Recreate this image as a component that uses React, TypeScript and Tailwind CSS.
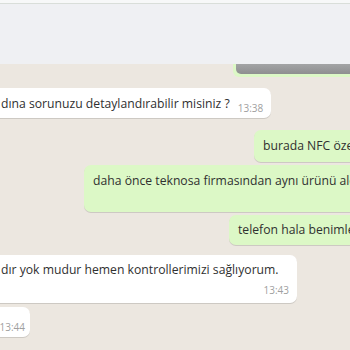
import React from "react";

const font = "font-['Open_Sans','Liberation_Sans',sans-serif]";

const Time = ({ t }: { t: string }) => (
  <span className="text-[10px] leading-[12px] text-[#a0a0a0] whitespace-nowrap">{t}</span>
);

export default function App() {
  return (
    <div className={`w-[350px] h-[350px] overflow-hidden bg-[#ece7e0] ${font} text-[12.2px] text-[#303030]`}>
      {/* top panel */}
      <div className="h-[64px] bg-[#eff0f3] border-t-[3px] border-t-[#f7f8f8]">
        <div className="h-px bg-[#d9ded9]" />
      </div>

      <div className="flex flex-col">
        {/* tail of image message */}
        <div className="ml-[233px] w-[130px] bg-[#dcf8c6] pl-[3px] pb-[3px] rounded-bl-[6px]">
          <div className="h-[10px] rounded-b-[5px] bg-gradient-to-b from-[#a3a4a5] to-[#8e8f90]" />
        </div>

        {/* incoming */}
        <div className="mt-[11px] self-start flex items-end gap-[8px] bg-white rounded-r-[7px] h-[30px] pl-[1px] pr-[8px] pb-[4px] shadow-[0_1px_0.5px_rgba(0,0,0,0.13)]">
          <span className="whitespace-nowrap leading-[20px]">dına sorunuzu detaylandırabilir misiniz ?</span>
          <Time t="13:38" />
        </div>

        {/* outgoing */}
        <div className="mt-[12px] ml-[254px] w-[140px] h-[32px] flex items-center bg-[#dcf8c6] rounded-l-[7px] pl-[9px] shadow-[0_1px_0.5px_rgba(0,0,0,0.13)]">
          <span className="whitespace-nowrap">burada NFC özelliği var mı</span>
        </div>
        <div className="mt-[3px] ml-[84px] w-[300px] h-[47px] bg-[#dcf8c6] rounded-l-[7px] pl-[9px] pt-[6px] shadow-[0_1px_0.5px_rgba(0,0,0,0.13)]">
          <span className="whitespace-nowrap leading-[20px]">daha önce teknosa firmasından aynı ürünü aldım</span>
        </div>
        <div className="mt-[3px] ml-[229px] w-[160px] h-[30px] flex items-center bg-[#dcf8c6] rounded-l-[7px] pl-[9px] shadow-[0_1px_0.5px_rgba(0,0,0,0.13)]">
          <span className="whitespace-nowrap">telefon hala benimle</span>
        </div>

        {/* incoming */}
        <div className="mt-[10px] self-start w-[297px] h-[48px] flex flex-col bg-white rounded-r-[7px] pl-[1px] pr-[8px] pt-[5px] shadow-[0_1px_0.5px_rgba(0,0,0,0.13)]">
          <span className="whitespace-nowrap leading-[20px]">dır yok mudur hemen kontrollerimizi sağlıyorum.</span>
          <div className="mt-auto mb-[4px] self-end">
            <Time t="13:43" />
          </div>
        </div>
        <div className="mt-[4px] self-start w-[30px] h-[30px] flex items-end justify-end bg-white rounded-r-[7px] pr-[5px] pb-[4px] shadow-[0_1px_0.5px_rgba(0,0,0,0.13)]">
          <Time t="13:44" />
        </div>
      </div>
    </div>
  );
}
